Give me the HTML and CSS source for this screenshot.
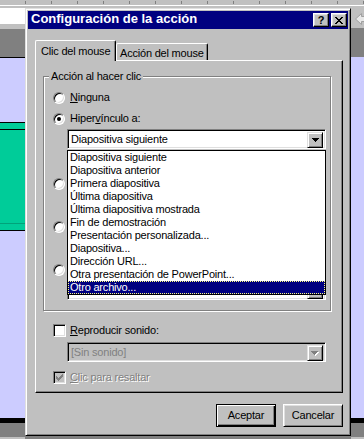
FILE: index.html
```html
<!DOCTYPE html>
<html lang="es">

<head>
    <meta charset="UTF-8">
    <title>Configuración de la acción</title>
    <link rel="stylesheet" href="styles.css">
</head>

<body>
    <div class="ruler"></div>
    <div class="work">
        <div class="strip strip-left"></div>
        <div class="middle">
            <div class="dialog">
                <div class="titlebar">
                    <span class="title">Configuración de la acción</span>
                    <span class="tb-btn tb-help">?</span>
                    <span class="tb-btn tb-close">
                        <svg width="8" height="7" viewBox="0 0 8 7" shape-rendering="crispEdges"><path d="M0 0h2v1h-2zM6 0h2v1h-2zM1 1h2v1h-2zM5 1h2v1h-2zM2 2h4v1h-4zM3 3h2v1h-2zM2 4h4v1h-4zM1 5h2v1h-2zM5 5h2v1h-2zM0 6h2v1h-2zM6 6h2v1h-2z" fill="#000"/></svg>
                    </span>
                </div>
                <div class="dialog-body">
                    <div class="tabs">
                        <div class="tab tab-active">Clic del mouse</div>
                        <div class="tab tab-inactive">Acción del mouse</div>
                    </div>
                    <div class="panel">
                        <div class="group">
                            <div class="legend">Acción al hacer clic</div>
                            <div class="option opt-none"><span class="radio"></span><span><u>N</u>inguna</span></div>
                            <div class="option opt-link"><span class="radio checked"></span><span>Hiper<u>v</u>ínculo a:</span></div>
                            <div class="combo combo-link">
                                <span class="combo-text">Diapositiva siguiente</span>
                                <span class="combo-btn"><svg width="7" height="4" viewBox="0 0 7 4" shape-rendering="crispEdges"><path d="M0 0h7v1h-7zM1 1h5v1h-5zM2 2h3v1h-3zM3 3h1v1h-1z" fill="#000"/></svg></span>
                            </div>
                            <div class="option opt-program"><span class="radio"></span></div>
                            <div class="option opt-macro"><span class="radio"></span></div>
                            <div class="option opt-object"><span class="radio"></span></div>
                            <div class="combo combo-object">
                                <span class="combo-text"></span>
                                <span class="combo-btn"></span>
                            </div>
                            <ul class="dropdown">
                                <li>Diapositiva siguiente</li>
                                <li>Diapositiva anterior</li>
                                <li>Primera diapositiva</li>
                                <li>Última diapositiva</li>
                                <li>Última diapositiva mostrada</li>
                                <li>Fin de demostración</li>
                                <li>Presentación personalizada...</li>
                                <li>Diapositiva...</li>
                                <li>Dirección URL...</li>
                                <li>Otra presentación de PowerPoint...</li>
                                <li class="selected">Otro archivo...</li>
                            </ul>
                        </div>
                        <div class="check-row row-sound"><span class="check"></span><span><u>R</u>eproducir sonido:</span></div>
                        <div class="combo combo-sound disabled">
                            <span class="combo-text">[Sin sonido]</span>
                            <span class="combo-btn"><svg width="8" height="5" viewBox="0 0 8 5" shape-rendering="crispEdges"><path d="M1 1h7v1h-7zM2 2h5v1h-5zM3 3h3v1h-3zM4 4h1v1h-1z" fill="#fff"/><path d="M0 0h7v1h-7zM1 1h5v1h-5zM2 2h3v1h-3zM3 3h1v1h-1z" fill="#808080"/></svg></span>
                        </div>
                        <div class="check-row row-highlight disabled">
                            <span class="check checked"><svg width="7" height="7" viewBox="0 0 7 7" shape-rendering="crispEdges"><path d="M6 0h1v1h-1zM5 1h2v1h-2zM0 2h1v1h-1zM4 2h3v1h-3zM0 3h2v1h-2zM3 3h3v1h-3zM0 4h5v1h-5zM1 5h3v1h-3zM2 6h1v1h-1z" fill="#808080"/></svg></span>
                            <span><u>C</u>lic para resaltar</span>
                        </div>
                    </div>
                    <div class="actions">
                        <button class="btn btn-default">Aceptar</button>
                        <button class="btn">Cancelar</button>
                    </div>
                </div>
            </div>
            <div class="below"></div>
        </div>
        <div class="strip strip-right">
            <svg width="11" height="12" viewBox="0 0 11 12"><path d="M0.5 6 L6.5 0.5 V3.5 H10.5 V8.5 H6.5 V11.5 Z" fill="#e8e8e8" stroke="#a0a0a0"/></svg>
        </div>
    </div>
</body>

</html>
```

FILE: styles.css
```css
* {
    box-sizing: border-box;
}

html,
body {
    margin: 0;
}

body {
    width: 364px;
    height: 439px;
    overflow: hidden;
    background: #c0c0c0;
    font-family: "Liberation Sans", Arial, sans-serif;
    font-size: 11px;
    line-height: 13px;
    letter-spacing: -0.2px;
    color: #000;
}

u {
    text-decoration: underline;
}

/* the program window behind the dialog */
.ruler {
    height: 8px;
    background:
        linear-gradient(#fff, #fff) 0 5px / 100% 1px no-repeat,
        repeating-linear-gradient(90deg, transparent 0 25px, #808080 25px 26px) 0 1px / 100% 3px no-repeat,
        #c0c0c0;
}

.work {
    display: flex;
    height: 431px;
}

.strip-left {
    width: 25px;
    background: linear-gradient(to bottom,
            #fff 0 16px,
            #c0c0c0 16px 21px,
            #808080 21px 49px,
            #000 49px 50px,
            #ccccff 50px 114px,
            #000 114px 115px,
            #00cc99 115px 121px,
            #000 121px 122px,
            #00cc99 122px 215px,
            #00a37a 215px 216px,
            #00cc99 216px 222px,
            #000 222px 223px,
            #ccccff 223px 410px,
            #000 410px 415px,
            #808080 415px 429px,
            #c0c0c0 429px);
}

.strip-right {
    flex: 1;
    padding: 5px 0 0 4px;
    overflow: hidden;
    background: linear-gradient(to bottom,
            #c0c0c0 0 20px,
            #808080 20px 49px,
            #ccccff 49px 410px,
            #000 410px 415px,
            #808080 415px 429px,
            #c0c0c0 429px);
}

.strip-right svg {
    display: block;
}

.middle {
    width: 326px;
    display: flex;
    flex-direction: column;
}

.below {
    flex: 1;
    background: #808080;
}

/* dialog */
.dialog {
    height: 428px;
    padding: 2px;
    background: #c0c0c0;
    border: 1px solid;
    border-color: #dfdfdf #000 #000 #dfdfdf;
    box-shadow: inset 1px 1px #fff, inset -1px -1px #808080;
}

.titlebar {
    display: flex;
    height: 18px;
    padding: 0 1px 0 3px;
    background: #000080;
    color: #fff;
}

.title {
    flex: 1;
    font-weight: bold;
    font-size: 13px;
    line-height: 16px;
    letter-spacing: 0;
}

.tb-btn {
    display: flex;
    align-items: center;
    justify-content: center;
    width: 16px;
    height: 14px;
    margin-top: 2px;
    background: #c0c0c0;
    border: 1px solid;
    border-color: #fff #000 #000 #fff;
    box-shadow: inset -1px -1px #808080, inset 1px 1px #dfdfdf;
    color: #000;
}

.tb-help {
    font-weight: bold;
    font-size: 11px;
    line-height: 11px;
    letter-spacing: 0;
}

.tb-close {
    margin-left: 2px;
}

.dialog-body {
    padding: 11px 0 0 7px;
}

.tabs {
    display: flex;
    align-items: flex-end;
    height: 20px;
}

.tab {
    background: #c0c0c0;
    border-top: 1px solid #fff;
    border-left: 1px solid #fff;
    border-right: 1px solid #000;
    border-radius: 2px 2px 0 0;
    box-shadow: inset -1px 0 #808080;
    white-space: nowrap;
}

.tab-active {
    position: relative;
    z-index: 1;
    width: 81px;
    height: 21px;
    margin-bottom: -1px;
    padding: 4px 0 0 5px;
}

.tab-inactive {
    width: 92px;
    height: 17px;
    padding: 3px 0 0 3px;
}

.panel {
    width: 308px;
    height: 333px;
    padding: 15px 0 0 7px;
    border: 1px solid;
    border-color: #fff #000 #000 #fff;
    box-shadow: inset -1px -1px #808080;
}

.group {
    position: relative;
    width: 288px;
    height: 235px;
    padding-left: 9px;
    border: 1px solid #808080;
    box-shadow: inset 1px 1px #fff, 1px 1px #fff;
}

.legend {
    width: fit-content;
    margin: -7px 0 0 -4px;
    padding: 0 2px;
    background: #c0c0c0;
}

.option {
    display: flex;
    align-items: center;
    gap: 5px;
    height: 13px;
}

.opt-none,
.opt-link {
    margin-top: 8px;
}

.opt-program {
    margin-top: 28px;
}

.opt-macro,
.opt-object {
    margin-top: 30px;
}

.radio {
    position: relative;
    width: 12px;
    height: 12px;
    border-radius: 50%;
    background: #fff;
    border: 1px solid;
    border-color: #808080 #fff #fff #808080;
    box-shadow: inset 1px 1px #000, inset -1px -1px #dfdfdf;
}

.radio.checked::after {
    content: "";
    position: absolute;
    left: 3px;
    top: 3px;
    width: 4px;
    height: 4px;
    border-radius: 50%;
    background: #000;
}

.combo {
    display: flex;
    width: 259px;
    height: 20px;
    margin-left: 14px;
    padding: 2px;
    background: #fff;
    border: 1px solid;
    border-color: #808080 #fff #fff #808080;
    box-shadow: inset 1px 1px #000, inset -1px -1px #dfdfdf;
}

.combo-link,
.combo-object {
    margin-top: 4px;
}

.combo-text {
    flex: 1;
    padding: 1px 0 0 1px;
    white-space: nowrap;
}

.combo-btn {
    display: flex;
    align-items: center;
    justify-content: center;
    width: 16px;
    height: 16px;
    background: #c0c0c0;
    border: 1px solid;
    border-color: #dfdfdf #000 #000 #dfdfdf;
    box-shadow: inset 1px 1px #fff, inset -1px -1px #808080;
}

.combo.disabled {
    background: #c0c0c0;
    color: #808080;
}

.combo-sound {
    margin: 5px 0 0 24px;
}

/* open list of the hyperlink box */
.dropdown {
    position: absolute;
    left: 23px;
    top: 73px;
    width: 259px;
    margin: 0;
    padding: 0;
    list-style: none;
    background: #fff;
    border: 1px solid #000;
    z-index: 2;
}

.dropdown li {
    height: 13px;
    padding-left: 2px;
    white-space: nowrap;
}

.dropdown li.selected {
    background: #000080;
    color: #fff;
    outline: 1px dotted #ffff80;
    outline-offset: -1px;
}

.check-row {
    display: flex;
    align-items: center;
    gap: 4px;
    height: 13px;
    margin-left: 10px;
}

.row-sound {
    margin-top: 13px;
}

.row-highlight {
    margin-top: 9px;
}

.check {
    display: flex;
    align-items: center;
    justify-content: center;
    width: 13px;
    height: 13px;
    background: #fff;
    border: 1px solid;
    border-color: #808080 #fff #fff #808080;
    box-shadow: inset 1px 1px #000, inset -1px -1px #dfdfdf;
}

.check-row.disabled {
    color: #808080;
    text-shadow: 1px 1px 0 #fff;
}

.check-row.disabled .check {
    background: #c0c0c0;
}

.actions {
    display: flex;
    justify-content: flex-end;
    gap: 7px;
    width: 308px;
    margin-top: 11px;
}

.btn {
    width: 60px;
    height: 23px;
    padding: 0;
    font: inherit;
    letter-spacing: inherit;
    color: #000;
    background: #c0c0c0;
    border: 1px solid;
    border-color: #fff #000 #000 #fff;
    box-shadow: inset 1px 1px #dfdfdf, inset -1px -1px #808080;
}

.btn-default {
    border-color: #000;
    box-shadow: inset 1px 1px #fff, inset -1px -1px #000, inset -2px -2px #808080;
}
```
